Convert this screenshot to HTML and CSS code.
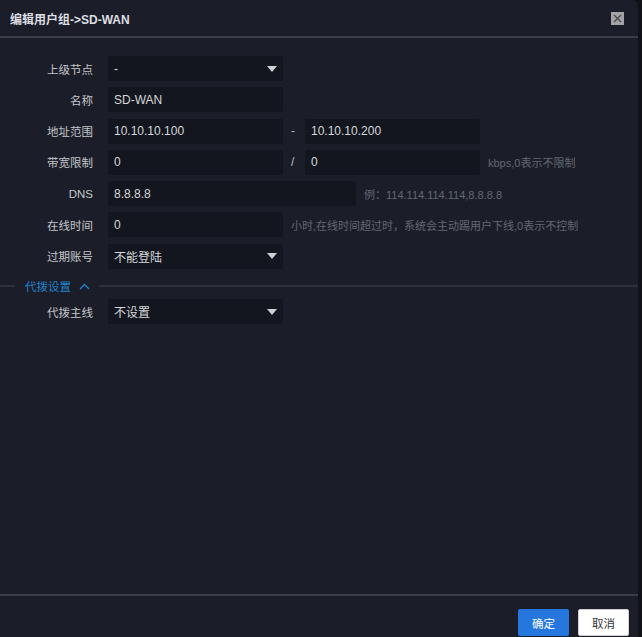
FILE: index.html
```html
<!DOCTYPE html>
<html lang="zh">
<head>
<meta charset="utf-8">
<title>编辑用户组</title>
<link rel="stylesheet" href="styles.css">
</head>
<body>
<div class="dialog">
  <div class="header">
    <div class="title">编辑用户组-&gt;SD-WAN</div>
    <div class="close"><svg width="13" height="13" viewBox="0 0 13 13"><rect width="13" height="13" fill="#a3a3a6"/><path d="M3 3L10 10M10 3L3 10" stroke="#4b4b50" stroke-width="1.4"/></svg></div>
  </div>
  <div class="body">
    <div class="row">
      <div class="label">上级节点</div>
      <div class="field select w174"><span>-</span><i class="caret"></i></div>
    </div>
    <div class="row">
      <div class="label">名称</div>
      <div class="field w174">SD-WAN</div>
    </div>
    <div class="row">
      <div class="label">地址范围</div>
      <div class="field w174">10.10.10.100</div>
      <div class="sep">-</div>
      <div class="field w174">10.10.10.200</div>
    </div>
    <div class="row">
      <div class="label">带宽限制</div>
      <div class="field w174">0</div>
      <div class="sep">/</div>
      <div class="field w174">0</div>
      <div class="hint">kbps,0表示不限制</div>
    </div>
    <div class="row">
      <div class="label">DNS</div>
      <div class="field w248">8.8.8.8</div>
      <div class="hint">例：114.114.114.114,8.8.8.8</div>
    </div>
    <div class="row">
      <div class="label">在线时间</div>
      <div class="field w174">0</div>
      <div class="hint">小时,在线时间超过时，系统会主动踢用户下线,0表示不控制</div>
    </div>
    <div class="row">
      <div class="label">过期账号</div>
      <div class="field select w174"><span>不能登陆</span><i class="caret"></i></div>
    </div>
    <div class="divider">
      <div class="dline short"></div>
      <div class="dtext">代拨设置</div>
      <svg class="chev" width="11" height="7" viewBox="0 0 11 7"><path d="M1 6L5.5 1.5L10 6" fill="none" stroke="#2283cc" stroke-width="1.3"/></svg>
      <div class="dline grow"></div>
    </div>
    <div class="row">
      <div class="label">代拨主线</div>
      <div class="field select w174"><span>不设置</span><i class="caret"></i></div>
    </div>
  </div>
  <div class="footer">
    <div class="btn primary">确定</div>
    <div class="btn plain">取消</div>
  </div>
</div>
</body>
</html>
```
FILE: styles.css
```css
html, body {
  margin: 0;
  padding: 0;
  background: #101218;
  height: 637px;
  overflow: hidden;
}
body {
  font-family: "Liberation Sans", "Noto Sans CJK SC", sans-serif;
}
.dialog {
  width: 638px;
  height: 637px;
  background: #1b1e29;
  border-top-right-radius: 6px;
  display: flex;
  flex-direction: column;
}
.header {
  height: 36px;
  border-bottom: 2px solid #3b3e47;
  display: flex;
  align-items: center;
  justify-content: space-between;
  padding: 0 14px 0 10px;
  flex: none;
}
.title {
  color: #dedfe2;
  font-size: 12px;
  font-weight: bold;
  margin-top: 1px;
}
.close {
  width: 13px;
  height: 13px;
  display: flex;
}
.body {
  flex: 1;
  padding-top: 18px;
}
.row {
  display: flex;
  align-items: center;
  height: 25px;
  margin-bottom: 6.3px;
}
.label {
  width: 93px;
  text-align: right;
  margin-right: 15px;
  color: #c4c5c9;
  font-size: 11.5px;
  flex: none;
}
.field {
  height: 25px;
  background: #13161e;
  border-radius: 2px;
  box-sizing: border-box;
  padding: 0 6px;
  display: flex;
  align-items: center;
  color: #d6d7db;
  font-size: 12px;
  flex: none;
}
.w174 { width: 175px; }
.w248 { width: 248px; }
.select { justify-content: space-between; padding-right: 6px; }
.caret {
  width: 0;
  height: 0;
  border-left: 5px solid transparent;
  border-right: 5px solid transparent;
  border-top: 6px solid #d0d0d4;
}
.sep {
  width: 22px;
  box-sizing: border-box;
  padding-left: 8px;
  color: #b9babe;
  font-size: 12px;
  flex: none;
}
.hint {
  margin-left: 8px;
  color: #64676f;
  font-size: 11px;
  white-space: nowrap;
}
.divider {
  display: flex;
  align-items: center;
  height: 18px;
  margin: 8.5px 0 4px;
}
.dline {
  height: 2px;
  background: #2d313a;
}
.dline.short { width: 15px; }
.dline.grow { flex: 1; }
.dtext {
  margin-left: 10px;
  color: #2283cc;
  font-size: 11.5px;
}
.chev {
  margin: 0 9px 0 8px;
}
.footer {
  flex: none;
  height: 43px;
  border-top: 2px solid #3b3e47;
  display: flex;
  align-items: flex-start;
  justify-content: flex-end;
  padding: 13px 9px 0 0;
  box-sizing: border-box;
}
.btn {
  width: 51px;
  height: 27px;
  box-sizing: border-box;
  display: flex;
  align-items: center;
  justify-content: center;
  font-size: 11.5px;
  border-radius: 2px;
}
.primary {
  background: #2677dd;
  color: #ffffff;
  margin-right: 9px;
}
.plain {
  background: #ffffff;
  color: #333333;
  border: 1px solid #cfcfd2;
}
```
